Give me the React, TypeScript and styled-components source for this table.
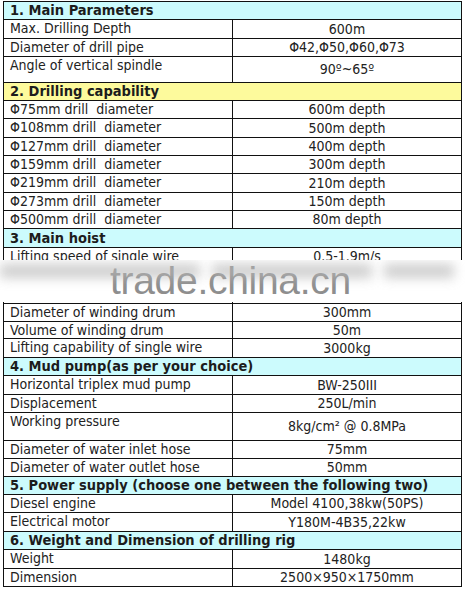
import styled, { createGlobalStyle } from 'styled-components'

const GlobalStyle = createGlobalStyle`
    html, body {
        margin: 0;
        padding: 0;
        background: #fff;
    }
`

type Row =
    | { kind: 'head'; text: string; tone: 'cyan' | 'yellow'; h: number }
    | { kind: 'item'; label: string; value: string; h: number; valign?: 'top' | 'middle' }

const rows: Row[] = [
    { kind: 'head', text: '1. Main Parameters', tone: 'cyan', h: 18 },
    { kind: 'item', label: 'Max. Drilling Depth', value: '600m', h: 19 },
    { kind: 'item', label: 'Diameter of drill pipe', value: 'Φ42,Φ50,Φ60,Φ73', h: 18 },
    { kind: 'item', label: 'Angle of vertical spindle', value: '90º~65º', h: 26 },
    { kind: 'head', text: '2. Drilling capability', tone: 'yellow', h: 18 },
    { kind: 'item', label: 'Φ75mm drill  diameter', value: '600m depth', h: 18 },
    { kind: 'item', label: 'Φ108mm drill  diameter', value: '500m depth', h: 19 },
    { kind: 'item', label: 'Φ127mm drill  diameter', value: '400m depth', h: 18 },
    { kind: 'item', label: 'Φ159mm drill  diameter', value: '300m depth', h: 18 },
    { kind: 'item', label: 'Φ219mm drill  diameter', value: '210m depth', h: 19 },
    { kind: 'item', label: 'Φ273mm drill  diameter', value: '150m depth', h: 18 },
    { kind: 'item', label: 'Φ500mm drill  diameter', value: '80m depth', h: 18 },
    { kind: 'head', text: '3. Main hoist', tone: 'cyan', h: 19 },
    { kind: 'item', label: 'Lifting speed of single wire', value: '0.5-1.9m/s', h: 56, valign: 'top' },
    { kind: 'item', label: 'Diameter of winding drum', value: '300mm', h: 18 },
    { kind: 'item', label: 'Volume of winding drum', value: '50m', h: 17 },
    { kind: 'item', label: 'Lifting capability of single wire', value: '3000kg', h: 19 },
    { kind: 'head', text: '4. Mud pump(as per your choice)', tone: 'cyan', h: 18 },
    { kind: 'item', label: 'Horizontal triplex mud pump', value: 'BW-250III', h: 19 },
    { kind: 'item', label: 'Displacement', value: '250L/min', h: 18 },
    { kind: 'item', label: 'Working pressure', value: '8kg/cm² @ 0.8MPa', h: 28 },
    { kind: 'item', label: 'Diameter of water inlet hose', value: '75mm', h: 18 },
    { kind: 'item', label: 'Diameter of water outlet hose', value: '50mm', h: 18 },
    { kind: 'head', text: '5. Power supply (choose one between the following two)', tone: 'cyan', h: 18 },
    { kind: 'item', label: 'Diesel engine', value: 'Model 4100,38kw(50PS)', h: 18 },
    { kind: 'item', label: 'Electrical motor', value: 'Y180M-4B35,22kw', h: 19 },
    { kind: 'head', text: '6. Weight and Dimension of drilling rig', tone: 'cyan', h: 18 },
    { kind: 'item', label: 'Weight', value: '1480kg', h: 19 },
    { kind: 'item', label: 'Dimension', value: '2500×950×1750mm', h: 18 },
]

const Page = styled.div`
    position: relative;
    width: 465px;
    height: 589px;
    padding: 1px 0 0 3px;
    box-sizing: border-box;
    font-family: "DejaVu Sans Condensed", "DejaVu Sans", sans-serif;
    color: #222;
`

const Table = styled.table`
    width: 459px;
    border-collapse: collapse;
    table-layout: fixed;
    font-size: 14px;
`

const Tr = styled.tr<{ $h: number }>`
    height: ${(p) => p.$h}px;
`

const HeadCell = styled.td<{ $tone: 'cyan' | 'yellow' }>`
    border: 1px solid #111;
    background: ${(p) => (p.$tone === 'cyan' ? '#ccfbfd' : '#fdfa9c')};
    font-weight: bold;
    font-size: 14.5px;
    padding: 0 0 0 6px;
    line-height: 15px;
    vertical-align: middle;
    white-space: nowrap;
    color: #1c1c1c;
`

const LabelCell = styled.td`
    width: 207px;
    border: 1px solid #111;
    padding: 1px 0 0 6px;
    line-height: 15px;
    vertical-align: top;
    white-space: pre;
    overflow: hidden;
`

const ValueCell = styled.td<{ $valign: 'top' | 'middle' }>`
    border: 1px solid #111;
    padding: ${(p) => (p.$valign === 'top' ? '1px 0 0' : '0')};
    line-height: 15px;
    text-align: center;
    vertical-align: ${(p) => p.$valign};
    white-space: nowrap;
`

const Watermark = styled.div`
    position: absolute;
    left: 0;
    top: 260px;
    width: 465px;
    height: 42px;
    background: #fff;
    overflow: hidden;
    display: grid;
`

const SmearRow = styled.div`
    grid-area: 1 / 1;
    display: flex;
    gap: 12px;
    padding-top: 4px;
    height: 14px;
`

const Smear = styled.div<{ $w: number }>`
    width: ${(p) => p.$w}px;
    background: #b9b9b9;
    filter: blur(6px);
    opacity: 0.7;
`

const Brand = styled.div`
    grid-area: 1 / 1;
    padding-left: 110px;
    font-family: "Liberation Sans", Arial, sans-serif;
    font-size: 39px;
    line-height: 42px;
    color: #8e8e8e;
    letter-spacing: -0.3px;
`

export default function App() {
    return (
        <Page>
            <GlobalStyle />
            <Table>
                <tbody>
                    {rows.map((r, i) =>
                        r.kind === 'head' ? (
                            <Tr key={i} $h={r.h}>
                                <HeadCell colSpan={2} $tone={r.tone}>{r.text}</HeadCell>
                            </Tr>
                        ) : (
                            <Tr key={i} $h={r.h}>
                                <LabelCell>{r.label}</LabelCell>
                                <ValueCell $valign={r.valign || 'middle'}>{r.value}</ValueCell>
                            </Tr>
                        )
                    )}
                </tbody>
            </Table>
            <Watermark>
                <SmearRow>
                    <Smear $w={200} />
                    <Smear $w={160} />
                    <Smear $w={70} />
                </SmearRow>
                <Brand>trade.china.cn</Brand>
            </Watermark>
        </Page>
    )
}
